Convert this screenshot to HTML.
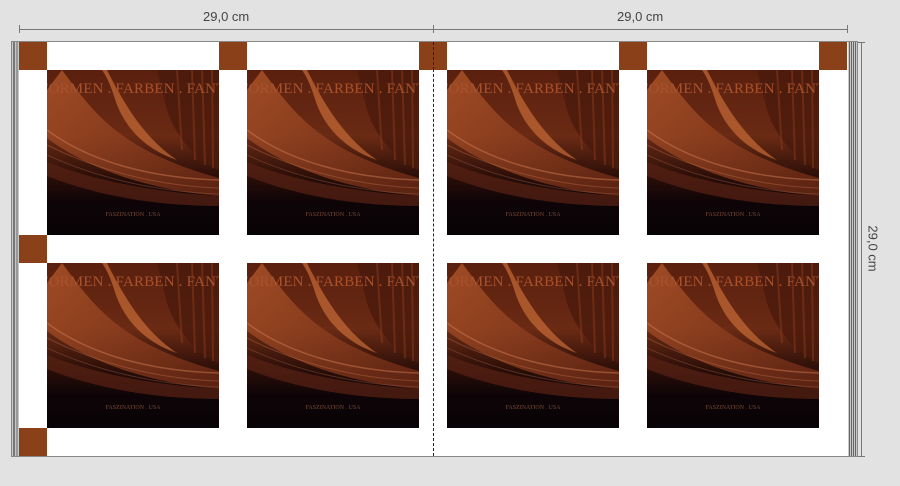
<!DOCTYPE html>
<html><head><meta charset="utf-8"><style>
*{margin:0;padding:0;box-sizing:border-box}
body{width:900px;height:486px;background:#e2e2e2;position:relative;overflow:hidden;font-family:"Liberation Sans",sans-serif}
.abs{position:absolute}
.lbl{position:absolute;font-size:13px;color:#444;}
.sq{position:absolute;width:28px;height:28px;background:#8a4119}
.tile{position:absolute;width:172px;height:165px;overflow:hidden;background:#0d0508}
.tile svg{position:absolute;left:0;top:0}
.t1{position:absolute;left:-7px;top:11px;white-space:nowrap;font-family:"Liberation Serif",serif;font-size:15px;color:#a8522e;letter-spacing:0.2px}
.t2{position:absolute;left:0;width:100%;text-align:center;top:142px;font-family:"Liberation Serif",serif;font-size:6px;color:#7a4a34}
</style></head><body>
<div class="abs" style="left:19px;top:29px;width:829px;height:1px;background:#777"></div>
<div class="abs" style="left:19px;top:25px;width:1px;height:8px;background:#777"></div>
<div class="abs" style="left:433px;top:25px;width:1px;height:8px;background:#777"></div>
<div class="abs" style="left:847px;top:25px;width:1px;height:8px;background:#777"></div>
<div class="lbl" style="left:203px;top:9px">29,0 cm</div>
<div class="lbl" style="left:617px;top:9px">29,0 cm</div>
<div class="abs" style="left:861px;top:42px;width:1px;height:415px;background:#777"></div>
<div class="abs" style="left:857px;top:42px;width:8px;height:1px;background:#777"></div>
<div class="abs" style="left:857px;top:456px;width:8px;height:1px;background:#777"></div>
<div class="lbl" style="left:850px;top:241px;transform:rotate(90deg);transform-origin:center">29,0 cm</div>
<div class="abs" style="left:11px;top:41px;width:847px;height:416px;border:1px solid #888;background:#c8c8c8"></div>
<div class="abs" style="left:13px;top:42px;width:2px;height:414px;background:#777"></div>
<div class="abs" style="left:16px;top:42px;width:2px;height:414px;background:#999"></div>
<div class="abs" style="left:849px;top:42px;width:1px;height:414px;background:#666"></div>
<div class="abs" style="left:851px;top:42px;width:1px;height:414px;background:#666"></div>
<div class="abs" style="left:853px;top:42px;width:1px;height:414px;background:#666"></div>
<div class="abs" style="left:855px;top:42px;width:1px;height:414px;background:#666"></div>
<div class="abs" style="left:19px;top:42px;width:829px;height:414px;background:#fff"></div>
<div class="abs" style="left:433px;top:44px;width:0;height:412px;border-left:1px dashed #222"></div>
<div class="sq" style="left:19px;top:42px"></div>
<div class="sq" style="left:219px;top:42px"></div>
<div class="sq" style="left:419px;top:42px"></div>
<div class="sq" style="left:619px;top:42px"></div>
<div class="sq" style="left:819px;top:42px"></div>
<div class="sq" style="left:19px;top:235px"></div>
<div class="sq" style="left:19px;top:428px"></div>
<div class="abs" style="left:433px;top:42px;width:0;height:28px;border-left:1px dashed #222"></div>
<div id="tiles"></div>
<script>
var svg='<svg width="172" height="165" viewBox="0 0 172 165"><defs>'+
'<linearGradient id="g" x1="0" y1="0" x2="0" y2="1"><stop offset="0" stop-color="#5a200e"/><stop offset="0.4" stop-color="#6a2a14"/><stop offset="0.65" stop-color="#2a0e08"/><stop offset="0.8" stop-color="#0e0407"/><stop offset="1" stop-color="#080306"/></linearGradient>'+
'<linearGradient id="h" x1="0" y1="0" x2="1" y2="1"><stop offset="0" stop-color="#b0562a"/><stop offset="1" stop-color="#6a2814"/></linearGradient></defs>'+
'<rect width="172" height="165" fill="url(#g)"/>'+
'<path d="M110 0 L172 0 L172 100 C150 90 130 70 120 40 Z" fill="#4a1a0c" opacity="0.8"/>'+
'<path d="M15 0 C45 40 70 80 172 108 L172 126 C100 120 40 98 0 68 L0 20 Z" fill="url(#h)" opacity="0.8"/>'+
'<path d="M60 0 C80 40 100 70 130 90 C100 80 80 60 70 35 C65 20 62 10 55 0 Z" fill="#d0703a" opacity="0.65"/>'+
'<path d="M0 92 C50 112 110 122 172 126 L172 136 C110 136 50 126 0 106 Z" fill="#5a2214" opacity="0.7"/>'+
'<path d="M0 60 C40 90 100 108 172 110" stroke="#d88058" stroke-width="1.5" fill="none" opacity="0.45"/>'+
'<path d="M0 75 C50 100 110 116 172 118" stroke="#c07050" stroke-width="1" fill="none" opacity="0.4"/>'+
'<path d="M0 85 C50 108 110 122 172 124" stroke="#a06048" stroke-width="1" fill="none" opacity="0.4"/>'+
'<path d="M130 0 L135 80 M145 0 L148 90 M155 0 L158 95 M165 0 L166 98" stroke="#8a3c1c" stroke-width="2" opacity="0.5"/>'+
'</svg>';
var xs=[47,247,447,647],ys=[70,263],h='';
ys.forEach(function(y){xs.forEach(function(x){
h+='<div class="tile" style="left:'+x+'px;top:'+y+'px">'+svg+'<div class="t1">FORMEN . FARBEN . FANTASIE</div><div class="t2">FASZINATION . USA</div></div>';});});
document.getElementById('tiles').innerHTML=h;
</script>
</body></html>
